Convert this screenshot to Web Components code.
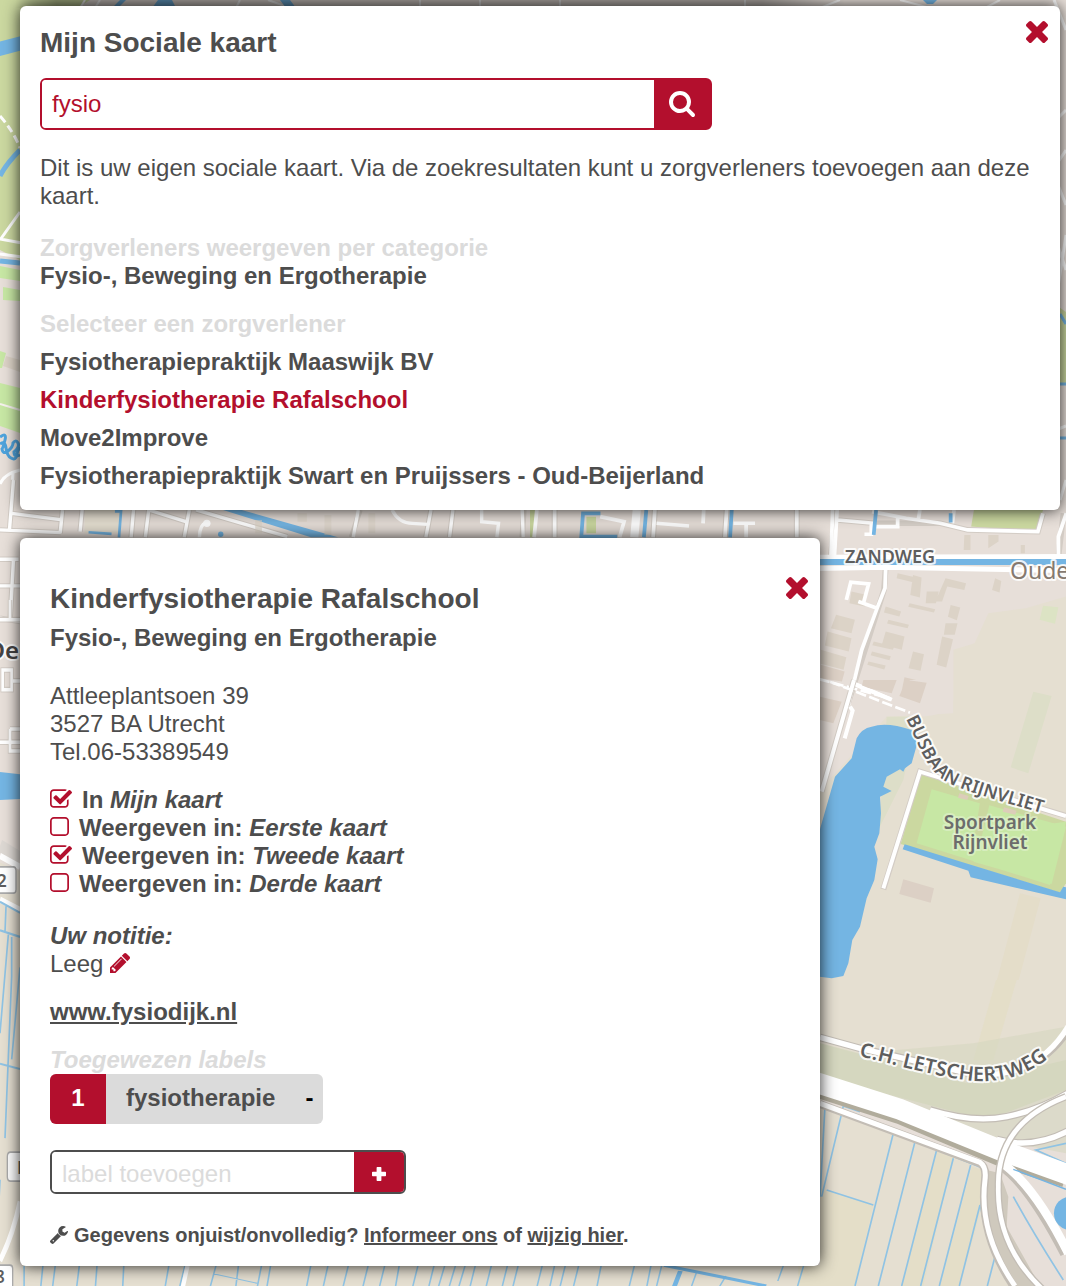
<!DOCTYPE html>
<html lang="nl">
<head>
<meta charset="utf-8">
<meta name="viewport" content="width=device-width, initial-scale=1">
<title>Mijn Sociale kaart</title>
<style>
  :root {
    --red: #b30f2d;
    --ink: #4d4d4d;
    --pale: #dbdbdb;
  }
  html, body { margin: 0; min-height: 100%; }
  body {
    font-family: "Liberation Sans", Arial, sans-serif;
    font-size: 24px;
    line-height: 28px;
    color: var(--ink);
  }
</style>
</head>
<body>
<social-map-app></social-map-app>

<script>
const define = (name, html) => {
  const template = document.createElement('template');
  template.innerHTML = html;
  customElements.define(name, class extends HTMLElement {
    constructor() {
      super();
      this.attachShadow({ mode: 'open' }).append(template.content.cloneNode(true));
    }
  });
};

/* Icons: viewBox, drawn width, drawn height, path */
const ICONS = {
  times: ['302 366 1188 1188', 22, 22, 'M1490 1322q0 40-28 68l-136 136q-28 28-68 28t-68-28l-294-294-294 294q-28 28-68 28t-68-28l-136-136q-28-28-28-68t28-68l294-294-294-294q-28-28-28-68t28-68l136-136q28-28 68-28t68 28l294 294 294-294q28-28 68-28t68 28l136 136q28 28 28 68t-28 68l-294 294 294 294q28 28 28 68z'],
  search: ['64 128 1664 1664', 26, 26, 'M1216 832q0-185-131.5-316.5t-316.5-131.5-316.5 131.5-131.5 316.5 131.5 316.5 316.5 131.5 316.5-131.5 131.5-316.5zm512 832q0 52-38 90t-90 38q-54 0-90-38l-343-342q-179 124-399 124-143 0-273.5-55.5t-225-150-150-225-55.5-273.5 55.5-273.5 150-225 225-150 273.5-55.5 273.5 55.5 225 150 150 225 55.5 273.5q0 220-124 399l343 343q37 37 37 90z'],
  checked: ['64 128 1664 1408', 22, 19, 'M1472 930v318q0 119-84.5 203.5t-203.5 84.5h-832q-119 0-203.5-84.5t-84.5-203.5v-832q0-119 84.5-203.5t203.5-84.5h832q63 0 117 25 15 7 18 23 3 17-9 29l-49 49q-10 10-23 10-3 0-9-2-23-6-45-6h-832q-66 0-113 47t-47 113v832q0 66 47 113t113 47h832q66 0 113-47t47-113v-254q0-13 9-22l64-64q10-10 23-10 6 0 12 3 20 8 20 29zm231-489l-814 814q-24 24-57 24t-57-24l-430-430q-24-24-24-57t24-57l110-110q24-24 57-24t57 24l263 263 647-647q24-24 57-24t57 24l110 110q24 24 24 57t-24 57z'],
  unchecked: ['192 128 1408 1408', 19, 19, 'M1312 256h-832q-66 0-113 47t-47 113v832q0 66 47 113t113 47h832q66 0 113-47t47-113v-832q0-66-47-113t-113-47zm288 160v832q0 119-84.5 203.5t-203.5 84.5h-832q-119 0-203.5-84.5t-84.5-203.5v-832q0-119 84.5-203.5t203.5-84.5h832q119 0 203.5 84.5t84.5 203.5z'],
  pencil: ['128 149 1515 1515', 20, 20, 'M491 1536l91-91-235-235-91 91v107h128v128h107zm523-928q0-22-22-22-10 0-17 7l-542 542q-7 7-7 17 0 22 22 22 10 0 17-7l542-542q7-7 7-17zm-54-192l416 416-832 832h-416v-416zm683 96q0 53-37 90l-166 166-416-416 166-165q36-38 90-38 53 0 91 38l235 234q37 39 37 91z'],
  plus: ['0 0 14 14', 14, 14, 'M5.3 0h3.4q.7 0 .7.7v4h3.9q.7 0 .7.7v3.2q0 .7-.7.7h-3.9v4q0 .7-.7.7h-3.4q-.7 0-.7-.7v-4h-3.9q-.7 0-.7-.7v-3.2q0-.7.7-.7h3.9v-4q0-.7.7-.7z'],
  wrench: ['85 128 1641 1643', 18, 18, 'M448 1472q0-26-19-45t-45-19-45 19-19 45 19 45 45 19 45-19 19-45zm644-420l-682 682q-37 37-90 37-52 0-91-37l-106-108q-38-36-38-90 0-53 38-91l681-681q39 98 114.5 173.5t173.5 114.5zm634-435q0 39-23 106-47 134-164.5 217.5t-258.5 83.5q-185 0-316.5-131.5t-131.5-316.5 131.5-316.5 316.5-131.5q58 0 121.5 16.5t107.5 46.5q16 11 16 28t-16 28l-293 169v224l193 107q5-3 79-48.5t135.5-81 70.5-35.5q15 0 23.5 10t8.5 25z']
};
customElements.define('map-icon', class extends HTMLElement {
  connectedCallback() {
    if (this.shadowRoot) return;
    const [box, w, h, d] = ICONS[this.getAttribute('name')];
    this.attachShadow({ mode: 'open' }).innerHTML = `
      <style>
        :host { display: block; flex: none; }
        svg { display: block; fill: currentColor; }
      </style>
      <svg aria-hidden="true" viewBox="${box}" width="${w}" height="${h}"><path d="${d}"/></svg>`;
  }
});

define('street-map', `
  <style>
    :host { display: block; overflow: hidden; background: #e7dfd9; }
    svg { display: block; width: 100%; height: 100%; }
    .field { fill: #e5dfd1; } .sand { fill: #e4dec8; } .bld { fill: #dcd3c7; } .pink { fill: #dcd0c5; }
    .green { fill: #cbd8a0; } .lime { fill: #c7e7a4; } .verge { fill: #d5d7bf; }
    .water { fill: #74b5e3; }
    .w { fill: none; stroke: #74b5e3; } .ditch { fill: none; stroke: #8fc3e4; stroke-width: 5; }
    .case { fill: none; stroke: #c3bdb5; } .soft { stroke: #d3ccc5; } .road { fill: none; stroke: #fff; }
    text { font-family: "Noto Sans", "Open Sans", sans-serif; fill: #5e5e5e; stroke: #fff; stroke-width: 4px;
           stroke-opacity: .85; paint-order: stroke; stroke-linejoin: round; font-size: 18px; font-weight: 600; }
    .area { font-size: 19px; fill: #6c6c6c; stroke-opacity: .3; }
    .shield { font-size: 17px; }
  </style>
  <svg viewBox="0 0 1066 1286" preserveAspectRatio="xMinYMin slice" role="img" aria-label="Kaart">
    <defs>
      <path id="busbaan" d="M906 719C916 737 922 762 941 778C957 791 1010 803 1075 823"/>
      <path id="letschert" d="M859 1056C885 1062 945 1079 975 1081C1015 1083 1043 1068 1074 1034"/>
      <linearGradient id="shade" x1="0" x2="1" y1="0" y2="0">
        <stop offset="0" stop-color="#000" stop-opacity="0"/><stop offset=".05" stop-color="#000" stop-opacity=".3"/>
        <stop offset=".9" stop-color="#000" stop-opacity=".3"/><stop offset="1" stop-color="#000" stop-opacity="0"/>
      </linearGradient>
    </defs>
    <rect width="1066" height="1286" fill="#e7dfd9"/>

    <!-- left edge, upper half -->
    <path class="green" d="M0 0H90L80 6H30V265L0 250Z"/>
    <path fill="none" stroke="#74b5e3" stroke-width="14" d="M-5 50L22 43"/>
    <path class="w" stroke-width="5" d="M0 176Q6 164 20 150M0 261L20 263"/>
    <path fill="none" stroke="#fff" stroke-width="3" stroke-dasharray="8 4" d="M0 116Q14 132 20 148"/>
    <path fill="none" stroke="#fff" stroke-width="3" d="M0 240L20 212M0 239L22 243M0 254L22 257"/>
    <path class="lime" d="M0 266L20 270V281L0 278ZM3 287L20 290V301L3 300ZM0 351L6 353L2 368H0ZM0 383L20 388V433L0 426Z"/>
    <path class="bld" d="M6 356L20 360V372L3 366Z"/>
    <path fill="none" stroke="#f6f2ee" stroke-width="2" d="M0 404L20 410"/>
    <path fill="none" stroke="#4ea3dc" stroke-width="3" d="M0 437q7-5 5 3t-3 9q1 6 6 2t5-8q3-4 5 0t-4 9q0 6 6 3M0 444q5-4 6 4t5 10q5 3 6-4t6-6"/>
    <path fill="none" stroke="#fff" stroke-width="3" d="M0 484Q4 474 20 470M13 473L10 530"/>

    <!-- strip between the panels, left half -->
    <g transform="translate(0 480) scale(.338 .333)">
      <rect class="field" x="250" y="90" width="105" height="70"/>
      <g class="case soft" stroke-width="16"><path d="M35 100L185 120M0 150L180 158M40 0L28 150M185 90L178 160M243 90L237 155M395 90L388 172M440 90L430 172M440 90L550 125M560 90L545 172M580 90L850 170M1065 90L1040 172M1275 90L1260 172M1340 90L1330 172M1550 90L1545 172M0 238H55M40 238L30 420M0 318H60M0 415L60 425"/></g>
      <g class="road" stroke-width="10"><path d="M35 100L185 120M0 150L180 158M40 0L28 150M185 90L178 160M243 90L237 155M395 90L388 172M440 90L430 172M440 90L550 125M560 90L545 172M580 90L850 170M1060 90L1045 172M1275 90L1260 172M1340 90L1330 172M1425 90V125L1475 130L1470 172M1545 90L1548 172M590 172Q590 135 610 128M1160 90Q1180 130 1220 130L1265 133M0 238H55M40 238L30 420M0 318H60M0 415L60 425"/></g>
      <circle cx="612" cy="130" r="11" fill="#fff"/><circle cx="653" cy="163" r="8" class="water"/>
      <path class="water" d="M660 90H715L1000 172H920Z"/>
      <path class="w" stroke-width="8" d="M340 94H358L352 172M262 157L330 162"/>
      <path class="bld" d="M880 100h28v25h-28ZM960 105h20v60h-20ZM1090 100h20v60h-20ZM755 120h20v40h-20Z" opacity=".6"/>
    </g>

    <!-- district east of the panels -->
    <g transform="translate(530 480) scale(.342 .333)">
      <path class="field" d="M1238 720V510L1300 490L1340 400L1450 385L1568 350V1000H1238Z"/>
      <path fill="#dce3c4" d="M1500 378L1545 382L1535 432L1490 420Z"/>
      <path class="green" d="M0 90H20L10 172H0ZM165 110H193V160H165ZM1298 90H1500L1480 155L1290 140Z"/>
      <g class="bld"><path d="M940 335l45 10-6 35-45-10ZM895 405l55 15-10 40-60-15ZM870 455l70 20-8 40-70-18ZM850 510l75 22-8 38-67-18ZM1120 285l25 8-5 60-28-8ZM1075 280l50 12-5 15-48-12ZM1160 335h35l-8 35h-30ZM1215 295l60 15-5 20-50-10-15 45h-20ZM1360 295l18 8-5 35-22-8ZM1110 370l75 18-4 10-75-17ZM1230 375l28 8-10 38-26-10ZM1040 380l45 15-5 15-45-12ZM1048 420l60 15-4 10-60-14ZM1040 455l55 15-8 40-58-16ZM1215 430h35l-8 35h-32ZM1205 470l32 8-20 85-28-8ZM1120 515l32 8-10 50-35-8ZM1005 485l60 15-4 10-60-14ZM1000 515l55 14-4 12-55-15ZM990 545l50 12-4 12-50-14ZM1270 165h18v45h-20ZM1340 165h30v20l-30 20ZM1435 195h12v25h-12Z"/></g>
      <path class="pink" d="M850 555l70 20-8 30-62-10ZM1095 592l62 15-18 55-55-14Z"/>
      <g class="case soft" stroke-width="17"><path d="M72 90V172M365 90L360 172M575 90L570 172M780 90V172M892 90L880 230M1040 265L1035 330L930 670M1560 100L1545 230M900 120L1005 130H1080L1200 130L1280 150L1485 155L1500 100"/></g>
      <g class="road" stroke-width="11"><path d="M20 90L12 172M72 90V172M205 110L275 125L262 172M365 90L360 172M370 130L465 138M508 90L506 130M575 90L570 172M595 130L658 130M632 132V172M780 90V172M885 90L880 230M898 90L890 230M900 120L1005 130M1005 140H1075V115M978 163H998V130M1140 90L1135 122M1000 95L1100 115L1200 130L1280 150L1485 155L1500 100M1240 90L1235 130M1568 100L1545 170V230"/></g>
      <path class="road" stroke-width="24" d="M312 90L305 172"/>
      <g class="w" stroke-width="11"><path d="M206 100H155L150 170H255M340 90L333 172M590 90L585 172M1012 90L1005 165M1230 100V128"/></g>
      <path class="road" stroke-width="15" d="M840 232L1568 230M840 266L1040 262L1568 272"/>
      <path class="w" stroke-width="18" d="M840 246H1568"/>
      <g class="road" stroke-width="11"><path d="M1040 265L1038 325L1015 385L970 510L930 680M1015 385L960 365M925 360L938 307L990 312L975 370M950 612L1058 660"/></g>
      <path class="road" stroke-width="8" stroke-dasharray="32 10" d="M845 598L1050 655"/>
    </g>

    <!-- lake, sports park and fields -->
    <g transform="translate(800 680) scale(.3333)">
      <path class="field" d="M260 110L460 100V0H798V900H60V330Z"/>
      <path fill="#e7dfd9" d="M330 0H460V60Q450 110 350 110L270 90Z"/>
      <path class="pink" d="M320 0L380 8L360 70L298 48ZM190 0H290L275 40L185 20ZM60 50L125 65L100 130L60 120ZM310 598L402 625L392 668L298 642Z"/>
      <path fill="#dddec8" d="M700 35L755 48L685 280L632 262ZM260 110H350L310 300L230 460L250 310Z"/>
      <path fill="#e4ddc9" d="M660 640L722 655L640 960H575Z"/>
      <path class="water" d="M40 520L62 440L85 360L105 290L155 235L170 175Q185 145 215 140Q260 125 335 150L352 190L335 250L315 265L310 275L300 268L260 290L250 320L275 333L240 350L243 400L238 460L223 500L233 538L223 600L200 655L180 740L157 780L145 850L130 888L95 895L40 888Z"/>
      <path class="green" d="M362 282L798 425V610L780 638L302 492Z"/>
      <path class="lime" d="M395 328L547 372L535 460L798 425L750 615L350 490ZM565 375L798 440L755 612L520 545Z"/>
      <path class="green" d="M540 368L568 376L545 470L525 462Z"/>
      <path fill="#dccdb9" d="M478 340l28 8-4 12-28-7ZM612 382l38 10-4 12-38-9Z"/>
      <path class="water" d="M314 493L505 552L780 637L790 620L798 622V658L512 592L505 572L308 508Z"/>
      <path class="case soft" stroke-width="18" d="M162 0L65 335M250 628L360 275L798 408"/>
      <path class="road" stroke-width="12" d="M162 0L65 335M150 80L158 92L134 175M168 15L272 58M250 625L360 275L798 408"/>
      <path class="road" stroke-width="8" stroke-dasharray="32 10" d="M90 5L330 98"/>
    </g>

    <!-- motorway and parcels -->
    <g transform="translate(800 980) scale(.3333)">
      <path class="field" d="M60 0H798V360L60 300Z"/>
      <path class="sand" d="M588 0H650L580 240H520Z"/>
      <path class="verge" d="M60 190L180 220L520 190L798 140V520L640 490L60 290Z" opacity=".6"/>
      <path class="verge" d="M60 190L500 310L798 240V330L560 420L60 290Z"/>
      <path class="field" d="M60 370L550 560V700L640 918H0V860H60Z"/>
      <path class="sand" d="M62 625L220 675L165 918H0V860H60ZM410 515L460 530L370 918H305ZM515 560L550 570L545 680L480 918H420Z"/>
      <path fill="#cfc9bd" d="M560 570L600 580L625 650L620 740L720 918H640L560 740Z"/>
      <path class="ditch" d="M75 380L60 650M125 400L65 650M85 385L125 398L130 378L180 395M280 460L165 918M345 485L235 918M410 510L305 918M460 535L362 918M512 555L418 918M540 675L478 918M585 830L562 918M80 630L220 675M170 415L550 565L542 680Q560 800 640 918M640 650Q700 760 790 900M798 490L708 510L798 550M0 870L-10 918"/>
      <g class="case"><path stroke-width="24" d="M60 372L540 550Q560 560 555 600Q535 760 640 918"/><path stroke="#b1ac9c" stroke-width="70" d="M50 317L300 397L600 523L798 588"/><path stroke-width="36" d="M600 550Q690 610 798 820"/></g>
      <path class="road" stroke-width="15" d="M60 370L540 547Q560 560 555 600Q535 760 645 918"/>
      <path class="case" stroke-width="23" d="M390 390Q520 430 620 410T810 336M590 478Q700 510 810 450M60 172L180 205L530 285Q720 290 810 140"/>
      <path class="road" stroke-width="16" d="M390 390Q520 430 620 410T810 336M590 478Q700 510 810 450M60 172L180 205L530 285Q720 290 810 130"/>
      <path class="road" stroke-width="62" d="M50 308L300 388L600 510L810 586"/>
      <path class="road" stroke-width="26" d="M600 545Q700 610 805 820"/>
      <path class="case" stroke-width="22" d="M798 350Q590 430 595 620Q590 800 730 930"/>
      <path class="road" stroke-width="14" d="M798 350Q590 430 595 620Q590 800 730 930"/>
      <path class="w" stroke-width="4" d="M640 568L798 628"/>
      <ellipse class="water" cx="810" cy="700" rx="48" ry="50"/>
    </g>

    <!-- left edge, lower half -->
    <g transform="translate(0 600) scale(.3333 .4375)">
      <path class="field" d="M0 600L60 620V1568H0Z"/>
      <g class="case soft" stroke-width="13"><path d="M30 0V45M0 45H60M8 160V205H35V160ZM35 185H60M0 325H60M30 295V345H60M30 295H60"/></g>
      <g class="road" stroke-width="8"><path d="M30 0V45M0 45H60M8 160V205H35V160ZM35 185H60M0 325H60M30 295V345H60M30 295H60"/></g>
      <path class="water" d="M0 393L60 398V455L0 457Z"/>
      <path fill="none" stroke="#ddd8d3" stroke-width="30" d="M0 562L60 590"/>
      <path fill="none" stroke="#fff" stroke-width="14" d="M0 585L60 610M0 685L60 708M60 1375Q40 1450 0 1510"/>
      <path class="ditch" d="M0 690L60 715M18 700L15 760M0 755L60 770M25 765L0 990M35 770V860L15 1230M60 840L35 1050M0 1060L60 1072M0 1325L-5 1400"/>
      <path fill="#fff" stroke="#aaa" stroke-width="4" d="M-10 610H40Q48 610 48 618V662Q48 670 40 670H-10ZM75 1262H32Q22 1262 22 1272V1318Q22 1328 32 1328H75ZM-10 1520H30Q38 1520 38 1528V1600H-10Z"/>
    </g>

    <!-- bottom strip -->
    <g transform="translate(0 1256) scale(.5357 .3333)">
      <path class="field" d="M40 28H1500V95H40Z"/>
      <path class="sand" d="M1490 28H1568V95H1490Z"/>
      <path class="ditch" style="stroke-width:3" d="M45 30V95M80 30L76 95M103 30L98 95M148 30L143 95M181 30L178 95M231 30L229 95M315 30L308 95M345 30L335 95M403 30L392 95M445 30L440 95M488 30L480 95M505 30L498 95M580 30L572 95M612 30L603 95M650 30L640 95M687 30L677 95M718 30L708 95M745 30L738 95M780 30L770 95M810 30L800 95M830 30L818 95M850 30L838 95M868 30L856 95M887 30L877 95M917 30L907 95M947 30L937 95M967 30L957 95M1012 30L1002 95M1035 30L1026 95M1055 30L1045 95M1080 30L1070 95M1122 30L1114 95M1184 30L1174 95M1215 30L1207 95M1235 30L1225 95M1300 50L1290 95M1355 60L1342 95M1462 30L1452 75M1500 30L1488 95M398 53L480 82"/>
      <path fill="none" stroke="#fff" stroke-width="8" d="M350 30L341 95"/>
      <path class="w" stroke-width="9" d="M1240 28L1430 90M1270 45L1258 95"/>
    </g>

    <!-- top and right edges -->
    <path fill="none" stroke="#fff" stroke-width="2" d="M85 0L80 8M100 0L95 8M240 0L236 8M268 0L290 8M420 0V8M480 0V8M560 0V8M745 0V8M840 0L820 8M900 0L930 8M1000 0L985 8"/>
    <path class="water" d="M158 0H172L176 8H152ZM923 0H937L933 4H927ZM120 0H126L118 8H112ZM280 0H290L296 8H286Z"/>
    <path fill="none" stroke="#fff" stroke-width="3" d="M1054 0L1066 30M1056 120L1066 110M1056 165L1066 150M1056 180L1066 205M1056 300L1066 235M1056 240L1066 270M1056 340L1066 332M1056 430L1066 426M1060 500L1066 480"/>
    <path class="green" d="M1056 305L1066 312V385L1056 382Z"/>
    <path class="w" stroke-width="3" d="M1060 314L1066 324M1056 384H1066M1056 438H1066"/>
    <rect x="15" width="830" height="8" fill="url(#shade)"/>

    <text x="845" y="563">ZANDWEG</text>
    <text x="1010" y="579" style="font-size:23px;font-weight:400;fill:#85796f">Oude</text>
    <text class="area" x="990" y="829" text-anchor="middle">Sportpark</text>
    <text class="area" x="990" y="849" text-anchor="middle">Rijnvliet</text>
    <text><textPath href="#busbaan">BUSBAAN RIJNVLIET</textPath></text>
    <text style="font-size:20px"><textPath href="#letschert">C.H. LETSCHERTWEG</textPath></text>
    <text x="19" y="659" text-anchor="end" style="font-size:24px;fill:#444">De</text>
    <text class="shield" x="-3" y="887">2</text>
    <text class="shield" x="17" y="1174">N</text>
    <text class="shield" x="-5" y="1283">8</text>
  </svg>
`);

define('map-panel', `
  <style>
    :host {
      display: block; background: #fff; border-radius: 6px; box-sizing: border-box;
      padding: 12px 8px 20px 20px; box-shadow: 0 0 16px rgba(0, 0, 0, .85);
    }
    header { display: flex; align-items: flex-start; }
    ::slotted(h1), ::slotted(h2) { flex: 1; margin: 10px 0 0; font-size: 28px; line-height: 30px; }
    button {
      flex: none; width: 30px; height: 28px; padding: 0; border: 0; background: none; color: var(--red);
      display: flex; align-items: center; justify-content: center; cursor: pointer;
    }
  </style>
  <header><slot name="title"></slot><button type="button" aria-label="Sluiten"><map-icon name="times"></map-icon></button></header>
  <slot></slot>
`);

define('search-box', `
  <style>
    :host { display: block; max-width: 672px; }
    form { display: flex; height: 52px; box-sizing: border-box; border: 2px solid var(--red); border-radius: 6px; overflow: hidden; background: linear-gradient(90deg, #fff 50%, var(--red) 50%); }
    input { flex: 1; min-width: 0; border: 0; outline: 0; padding: 0 10px; font: inherit; color: var(--red); background: #fff; }
    button { width: 56px; border: 0; padding: 0; background: var(--red); color: #fff; display: flex; align-items: center; justify-content: center; }
  </style>
  <form onsubmit="return false">
    <input type="text" value="fysio" aria-label="Zoeken">
    <button type="submit" aria-label="Zoek"><map-icon name="search"></map-icon></button>
  </form>
`);

define('label-form', `
  <style>
    :host { display: block; max-width: 356px; }
    form { display: flex; height: 44px; box-sizing: border-box; border: 2px solid var(--ink); border-radius: 6px; overflow: hidden; }
    input { flex: 1; min-width: 0; border: 0; outline: 0; padding: 4px 10px 0; font: inherit; color: var(--ink); background: #fff; }
    input::placeholder { color: var(--pale); opacity: 1; }
    button { width: 50px; border: 0; padding: 4px 0 0; background: var(--red); color: #fff; display: flex; align-items: center; justify-content: center; }
  </style>
  <form onsubmit="return false">
    <input type="text" placeholder="label toevoegen" aria-label="label toevoegen">
    <button type="submit" aria-label="Toevoegen"><map-icon name="plus"></map-icon></button>
  </form>
`);

define('map-check', `
  <style>
    :host { display: block; font-weight: bold; }
    label { display: flex; gap: 10px; align-items: flex-start; }
    .box { display: grid; margin-top: 3px; color: var(--red); }
    .box > * { grid-area: 1 / 1; }
    input { appearance: none; margin: 0; width: 100%; height: 100%; }
    .on, input:checked ~ .off { display: none; }
    input:checked ~ .on { display: block; }
  </style>
  <label><span class="box"><input type="checkbox"><map-icon class="off" name="unchecked"></map-icon><map-icon class="on" name="checked"></map-icon></span><span><slot></slot></span></label>
`);
customElements.define('map-check-on', class extends customElements.get('map-check') {
  constructor() { super(); this.shadowRoot.querySelector('input').checked = true; }
});

define('label-tag', `
  <style>
    :host { display: flex; width: fit-content; height: 50px; border-radius: 6px; overflow: hidden; background: var(--pale); font-weight: bold; }
    span, button { padding: 10px 0 12px; }
    .count { width: 56px; text-align: center; background: var(--red); color: #fff; }
    .name { padding-left: 20px; padding-right: 30px; }
    button { border: 0; background: none; font: inherit; color: #000; padding-right: 10px; }
  </style>
  <span class="count"><slot name="count"></slot></span><span class="name"><slot></slot></span><button type="button" aria-label="Verwijder label">-</button>
`);

define('provider-list', `
  <style>
    :host { display: block; font-weight: bold; }
    h3 { margin: 0; font-size: 24px; color: var(--pale); }
    ul { list-style: none; margin: 10px 0 0; padding: 0; display: flex; flex-direction: column; gap: 10px; }
    a { color: inherit; text-decoration: none; }
    a[aria-current] { color: var(--red); }
  </style>
  <h3>Selecteer een zorgverlener</h3>
  <ul>
    <li><a href="#maaswijk">Fysiotherapiepraktijk Maaswijk BV</a></li>
    <li><a href="#rafalschool" aria-current="true">Kinderfysiotherapie Rafalschool</a></li>
    <li><a href="#move2improve">Move2Improve</a></li>
    <li><a href="#swart">Fysiotherapiepraktijk Swart en Pruijssers - Oud-Beijerland</a></li>
  </ul>
`);

define('social-map-app', `
  <style>
    :host { display: grid; min-height: 100vh; }
    street-map, main { grid-area: 1 / 1; min-width: 0; }
    street-map { contain: size; }
    main { position: relative; display: flex; flex-direction: column; gap: 28px; padding: 6px 6px 20px 20px; }
    p, h3 { margin: 0; font-size: 24px; }
    a { color: inherit; }
    .plain { text-decoration: none; font-weight: bold; }
    .pale { color: var(--pale); }
    search-box { margin-top: 20px; }
    .intro { margin: 24px 0; }
    provider-list { margin-top: 20px; }
    .detail { width: 100%; max-width: 800px; padding: 36px 8px 18px 30px; }
    .kind { margin-top: 10px; }
    address { font-style: normal; margin: 30px 0 20px; }
    .note { margin: 24px 0 20px; }
    .note p { display: flex; gap: 7px; }
    .note button { margin: 3px 0 0; padding: 0; border: 0; background: none; color: var(--red); height: 20px; }
    .site { font-weight: bold; margin-bottom: 20px; }
    label-form { margin: 26px 0 28px; }
    footer { display: flex; align-items: center; gap: 6px; font-size: 20px; line-height: 26px; font-weight: bold; }
  </style>
  <street-map></street-map>
  <main>
    <map-panel>
      <h1 slot="title">Mijn Sociale kaart</h1>
      <search-box></search-box>
      <p class="intro">Dit is uw eigen sociale kaart. Via de zoekresultaten kunt u zorgverleners toevoegen aan deze kaart.</p>
      <h3 class="pale">Zorgverleners weergeven per categorie</h3>
      <p><a class="plain" href="#categorie">Fysio-, Beweging en Ergotherapie</a></p>
      <provider-list></provider-list>
    </map-panel>
    <map-panel class="detail">
      <h2 slot="title">Kinderfysiotherapie Rafalschool</h2>
      <h3 class="kind">Fysio-, Beweging en Ergotherapie</h3>
      <address>Attleeplantsoen 39<br>3527 BA Utrecht<br>Tel.06-53389549</address>
      <map-check-on>In <i>Mijn kaart</i></map-check-on>
      <map-check>Weergeven in: <i>Eerste kaart</i></map-check>
      <map-check-on>Weergeven in: <i>Tweede kaart</i></map-check-on>
      <map-check>Weergeven in: <i>Derde kaart</i></map-check>
      <div class="note">
        <h3><i>Uw notitie:</i></h3>
        <p><span>Leeg</span><button type="button" aria-label="Notitie bewerken"><map-icon name="pencil"></map-icon></button></p>
      </div>
      <p class="site"><a href="#fysiodijk">www.fysiodijk.nl</a></p>
      <h3 class="pale"><i>Toegewezen labels</i></h3>
      <label-tag><span slot="count">1</span>fysiotherapie</label-tag>
      <label-form></label-form>
      <footer><map-icon name="wrench"></map-icon><span>Gegevens onjuist/onvolledig? <a href="#informeer">Informeer ons</a> of <a href="#wijzig">wijzig hier</a>.</span></footer>
    </map-panel>
  </main>
`);
</script>
</body>
</html>
